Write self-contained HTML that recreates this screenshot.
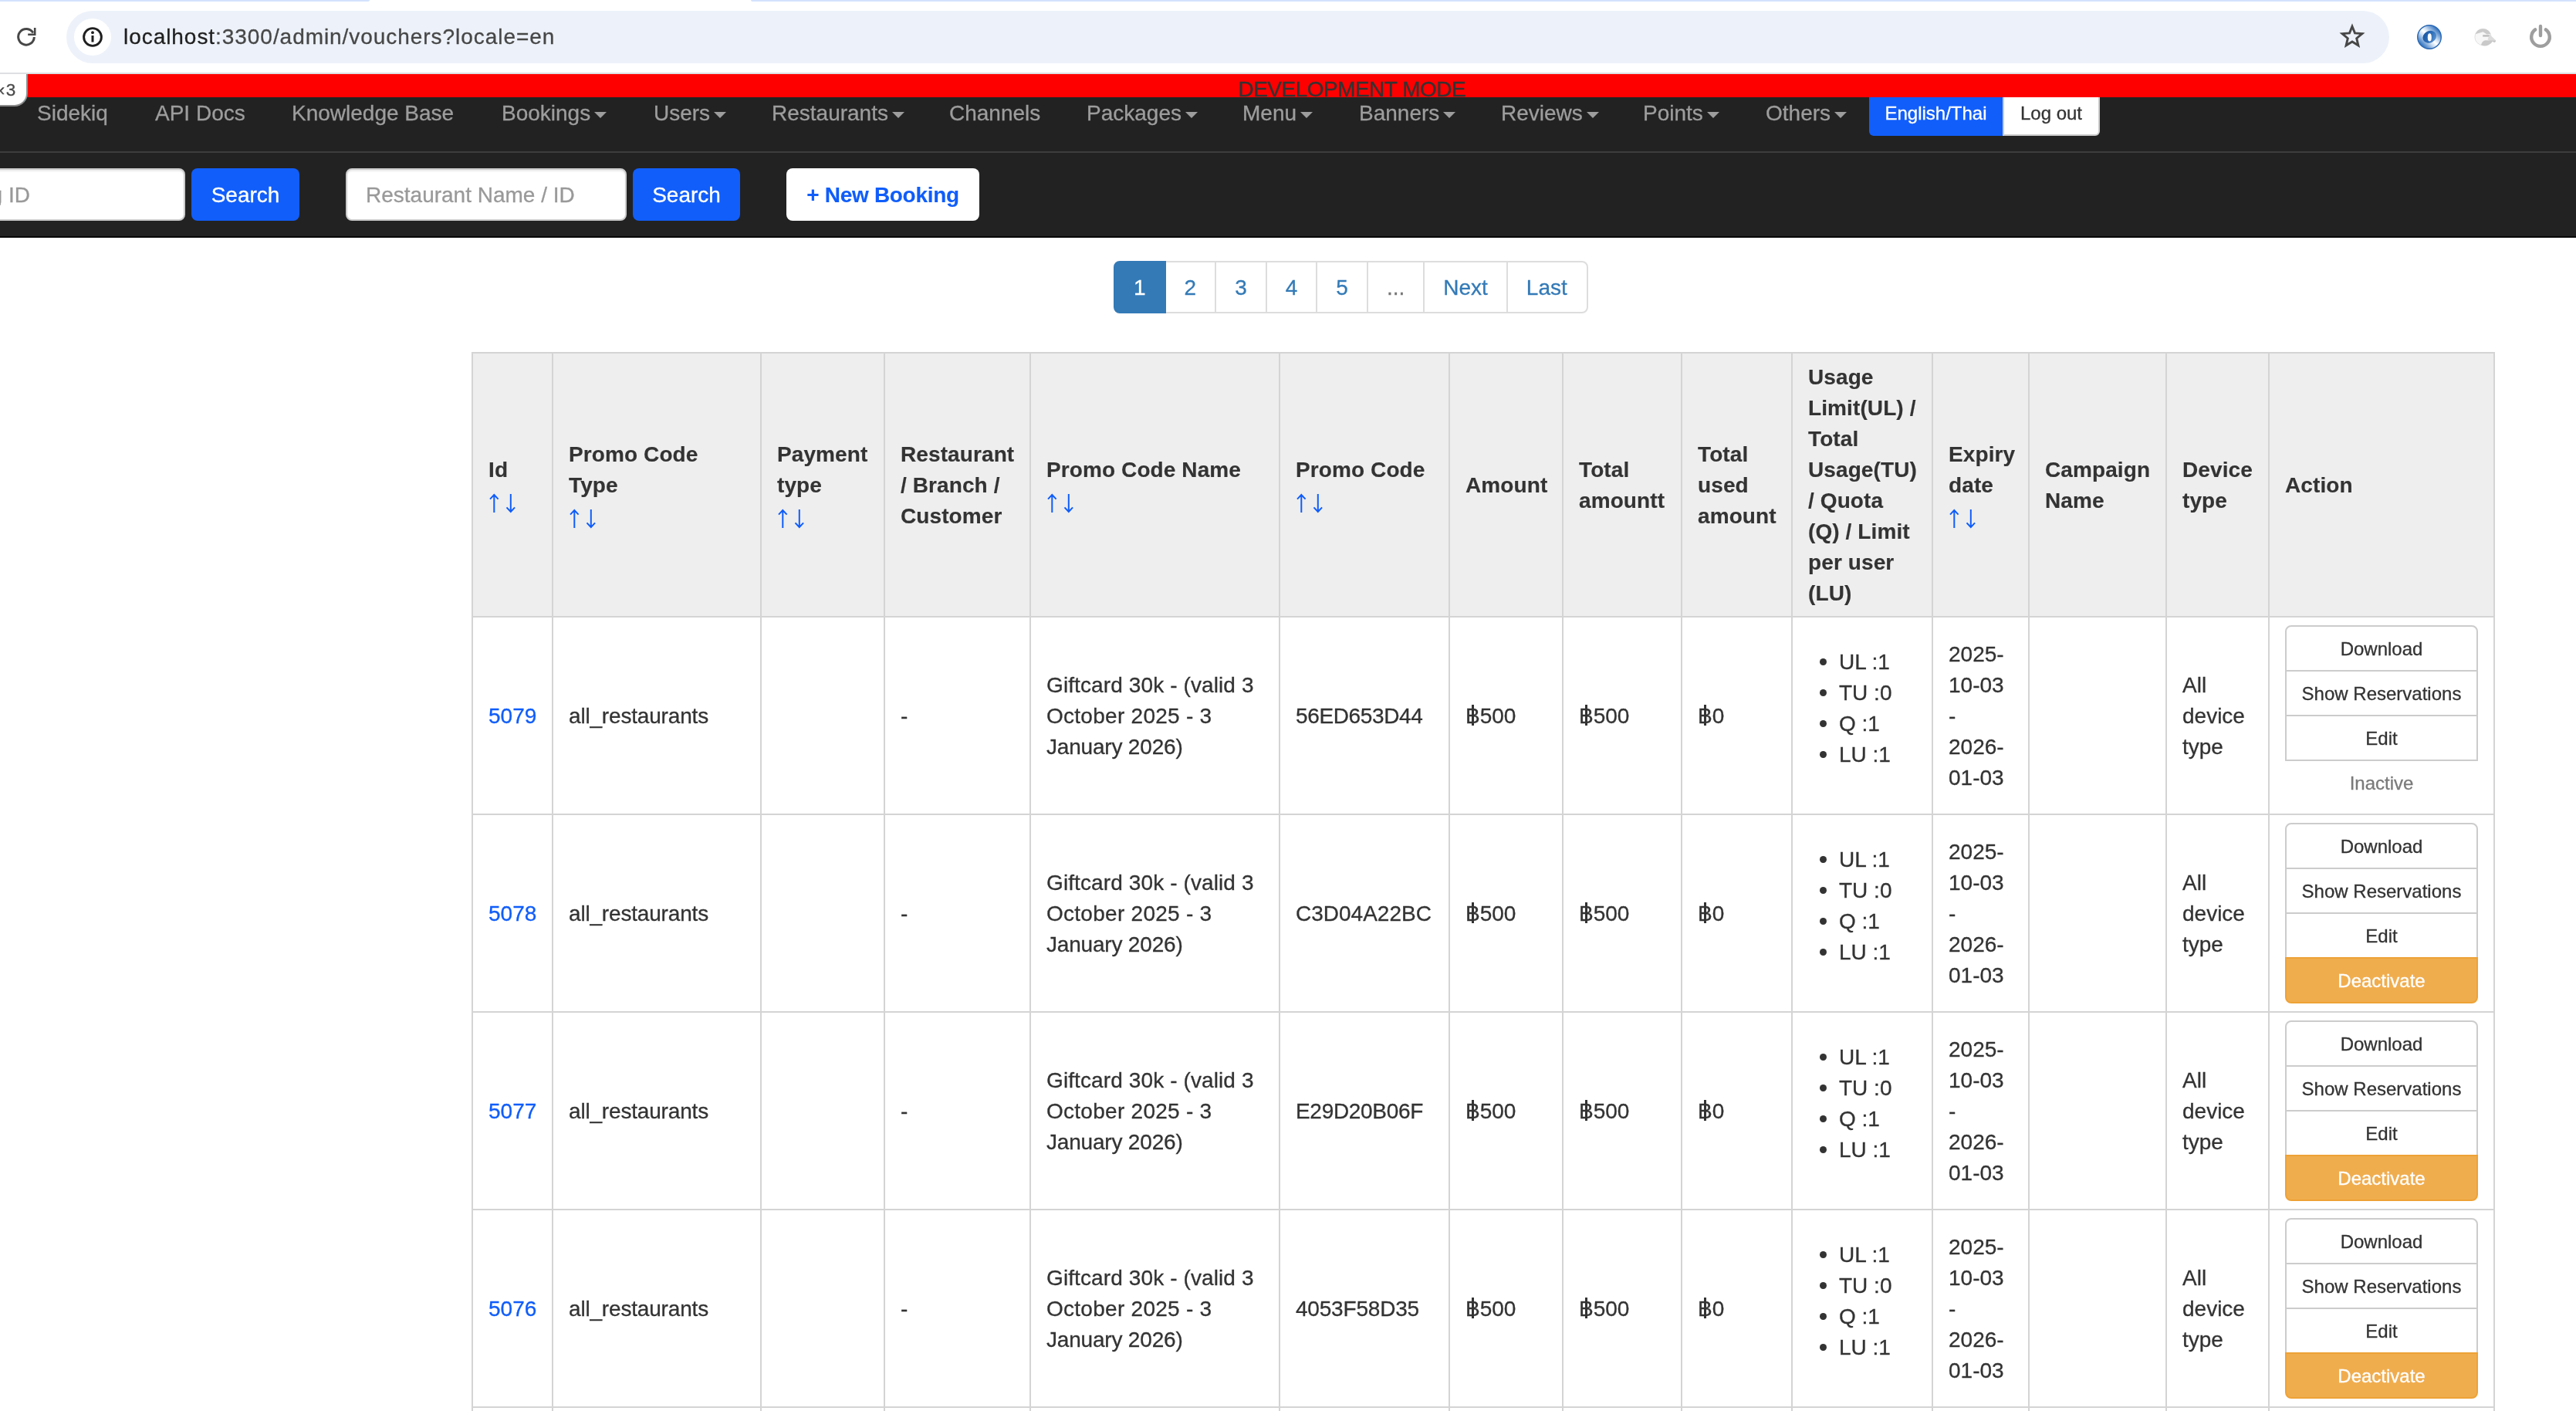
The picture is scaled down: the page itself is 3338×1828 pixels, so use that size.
<!DOCTYPE html>
<html>
<head>
<meta charset="utf-8">
<title>Vouchers</title>
<style>
*{box-sizing:border-box;}
html,body{margin:0;padding:0;}
body{width:3338px;height:1828px;overflow:hidden;background:#fff;position:relative;
  font-family:"Liberation Sans",sans-serif;font-size:28px;line-height:40px;color:#333;-webkit-text-stroke:0.3px;}
a{color:#0f5dfa;text-decoration:none;}
.abs{position:absolute;}
#chrome,#nav,#devbar,#badge,#pag,#tbl{will-change:transform;}

/* ---------- browser chrome ---------- */
#chrome{position:absolute;left:0;top:0;width:3338px;height:96px;background:#fff;z-index:50;}
#chrome .tabstripL{position:absolute;left:0;top:0;width:479px;height:2px;background:#d3e3fd;border-radius:0 0 6px 0;}
#chrome .tabstripR{position:absolute;left:973px;top:0;width:2365px;height:2px;background:#d3e3fd;border-radius:0 0 0 6px;}
#chrome .line{position:absolute;left:0;top:94px;width:3338px;height:2px;background:#dddfe2;}
#omni{position:absolute;left:86px;top:14px;width:3010px;height:68px;border-radius:34px;background:#edf2fa;}
#omni .chip{position:absolute;left:10px;top:10px;width:48px;height:48px;border-radius:24px;background:#fff;}
#url{position:absolute;left:160px;top:28px;font-size:28px;line-height:40px;color:#474747;white-space:nowrap;letter-spacing:0.95px;}
#url b{font-weight:normal;color:#1f1f1f;}

/* ---------- dev bar ---------- */
#devbar{position:absolute;left:0;top:96px;width:3338px;height:30px;background:#ff0000;z-index:20;overflow:hidden;}
#devbar span{position:absolute;left:1604.5px;top:0px;font-size:28px;line-height:40px;color:#333;white-space:nowrap;letter-spacing:-0.52px;}
#badge{position:absolute;left:-4px;top:92px;width:40px;height:46px;background:#fff;border-radius:0 0 17px 0;z-index:30;
  border-right:2px solid #8b9595;border-bottom:2px solid #8a8a8a;font-size:22.5px;line-height:40px;color:#4a4a4a;white-space:nowrap;}
#badge span{position:absolute;left:2.7px;top:5px;letter-spacing:1.5px;}

/* ---------- navbar ---------- */
#nav{position:absolute;left:0;top:96px;width:3338px;height:212px;background:#222;z-index:10;border-bottom:2px solid #080808;}
#nav .div{position:absolute;left:0;top:100px;width:3338px;height:2px;background:#3d3d3d;}
#nav .it{position:absolute;top:31px;font-size:28px;line-height:40px;color:#9d9d9d;white-space:nowrap;}
#nav .it i{display:inline-block;width:0;height:0;margin-left:5px;vertical-align:middle;border-top:8px solid #9d9d9d;border-left:8px solid transparent;border-right:8px solid transparent;position:relative;top:0px;}
.btnsm{position:absolute;height:60px;font-size:24px;line-height:36px;padding:11px 0 9px;border:2px solid transparent;white-space:nowrap;text-align:center;}
.inp{position:absolute;top:122px;height:68px;background:#fff;border:2px solid #ccc;border-radius:8px;box-shadow:inset 0 2px 2px rgba(0,0,0,.075);
  font-size:28px;line-height:40px;padding:13px 24px 11px;color:#999;white-space:nowrap;overflow:hidden;}
.btn{position:absolute;top:122px;height:68px;border-radius:8px;font-size:28px;line-height:40px;padding:13px 0 11px;text-align:center;white-space:nowrap;border:2px solid transparent;}
.btn.pri{background:#115efa;color:#fff;}
.btn.wht{background:#fff;color:#0f5dfa;font-weight:bold;letter-spacing:-0.3px;-webkit-text-stroke:0.1px;}

/* ---------- pagination ---------- */
#pag{position:absolute;left:1443px;top:338px;height:68px;display:flex;}
#pag span{display:block;height:68px;padding:13px 24px 11px;border:2px solid #ddd;margin-left:-2px;color:#337ab7;background:#fff;font-size:28px;line-height:40px;white-space:nowrap;}
#pag span:first-child{margin-left:0;border-radius:8px 0 0 8px;background:#337ab7;border-color:#337ab7;color:#fff;position:relative;z-index:2;}
#pag span:last-child{border-radius:0 8px 8px 0;padding-right:25.5px;}
#pag span.dis{color:#777;}

/* ---------- table ---------- */
#tbl{position:absolute;left:611px;top:456px;border-collapse:collapse;table-layout:fixed;width:2621px;}
#tbl th,#tbl td{border:2px solid #d4d4d4;padding:11px 20px 9px 20px;vertical-align:middle;text-align:left;font-size:28px;line-height:40px;white-space:nowrap;overflow:hidden;}
#tbl th{background:#eee;font-weight:bold;height:342px;color:#333;-webkit-text-stroke:0.15px;letter-spacing:0.1px;}
#tbl td{height:256px;}
#tbl td.stub{height:12px;padding:0;}
#tbl td.act{padding:10px 20px;}
#tbl ul{margin:0 0 20px 0;padding:0 0 0 40px;list-style:none;}
#tbl ul li{position:relative;}
#tbl ul li:before{content:"";position:absolute;left:-25px;top:15px;width:9px;height:9px;border-radius:5px;background:#333;}
#tbl th div{height:40px;position:relative;}
#tbl th div svg{position:absolute;left:0.5px;top:10px;}
.bg{width:250px;}
.bg div{height:60px;margin-top:-2px;border:2px solid #ccc;background:#fff;color:#333;font-size:24px;line-height:36px;padding:11px 0 9px;text-align:center;}
.bg div:first-child{margin-top:0;border-radius:8px 8px 0 0;}
.bg div.last{border-radius:0;}
.bg div.inact{border-color:transparent;background:transparent;color:#7a7a7a;}
.bg div.warn{background:#f0ad4e;border-color:#eea236;color:#fff;border-radius:0 0 8px 8px;}
.baht{position:relative;display:inline-block;}
.baht:after{content:"";position:absolute;left:8px;top:4.5px;width:3px;height:27.5px;background:#333;}
</style>
</head>
<body>

<div id="chrome">
  <div class="tabstripL"></div><div class="tabstripR"></div>
  <svg class="abs" style="left:20px;top:34px" width="28" height="28" viewBox="0 0 28 28"><path d="M22.9 8.6 A10.3 10.3 0 1 0 24.3 14" fill="none" stroke="#474747" stroke-width="3"/><path d="M25.2 2.1 V10.8 H16.2" fill="none" stroke="#474747" stroke-width="2.6"/></svg>
  <div id="omni"><div class="chip"></div></div>
  <svg class="abs" style="left:104px;top:32px" width="32" height="32" viewBox="0 0 32 32"><circle cx="16" cy="16" r="11.4" fill="none" stroke="#1f1f1f" stroke-width="2.9"/><rect x="14.5" y="14" width="3" height="8.5" fill="#1f1f1f"/><circle cx="16" cy="10.2" r="1.9" fill="#1f1f1f"/></svg>
  <div id="url"><b>localhost</b>:3300/admin/vouchers?locale=en</div>
  <svg class="abs" style="left:3030px;top:29px" width="36" height="36" viewBox="0 0 36 36"><path d="M18 5.2 L21.5 13.9 L30.9 14.6 L23.7 20.7 L25.9 29.8 L18 24.9 L10.1 29.8 L12.3 20.7 L5.1 14.6 L14.5 13.9 Z" fill="none" stroke="#474747" stroke-width="2.9" stroke-linejoin="miter"/></svg>
  <svg class="abs" style="left:3120px;top:20px" width="130" height="56" viewBox="0 0 130 56">
    <defs>
      <linearGradient id="g1" x1="1" y1="0" x2="0" y2="1"><stop offset="0.16" stop-color="#3273bf"/><stop offset="0.4" stop-color="#cfe0f3"/><stop offset="0.5" stop-color="#ffffff"/><stop offset="0.6" stop-color="#cfe0f3"/><stop offset="0.84" stop-color="#3273bf"/></linearGradient>
      <linearGradient id="g2" x1="0" y1="0" x2="1" y2="1"><stop offset="0" stop-color="#174f9a"/><stop offset="0.55" stop-color="#2e6fba"/><stop offset="1" stop-color="#6fa2d9"/></linearGradient>
    </defs>
    <circle cx="28" cy="28" r="15.3" fill="url(#g1)" stroke="#2a68b4" stroke-width="1.4"/>
    <ellipse cx="28.3" cy="27.7" rx="9.2" ry="7.6" fill="url(#g2)" transform="rotate(-28 28.3 27.7)"/>
    <ellipse cx="28.3" cy="28.4" rx="2.5" ry="5.1" fill="#fff"/>
    <circle cx="97.5" cy="28" r="10.6" fill="#f7f7f7" stroke="#e2e2e2" stroke-width="1"/>
    <path d="M87.6 24.2 A10.6 10.6 0 0 1 107.3 23.9 L102.5 24.6 L97.6 21.2 L92.6 22.8 Z" fill="#cbcbcb"/>
    <rect x="97.2" y="25.2" width="9" height="2.4" fill="#bcbcbc"/>
    <path d="M106 24.5 L114.3 32.6 L112.8 34.9 L108.5 33.4 L103.5 31.4 Z" fill="#dcdcdc"/>
    <path d="M111 32.4 L114.3 32.7 L112.8 34.9 L109.6 33.8 Z" fill="#c6c6c6"/>
    <path d="M95 38.3 Q96.5 32.6 100.5 32.3 L110.6 32.4 Q108.5 36.6 104.3 38.6 A10.6 10.6 0 0 1 95 38.3 Z" fill="#c9c9c9"/>
  </svg>
  <svg class="abs" style="left:3274px;top:29px" width="36" height="36" viewBox="0 0 36 36"><path d="M11.2 9.4 A11.8 11.8 0 1 0 24.8 9.4" fill="none" stroke="#9e9e9e" stroke-width="4.4" stroke-linecap="round"/><path d="M18 5 V17" stroke="#9e9e9e" stroke-width="4.4" stroke-linecap="round"/></svg>
  <div class="line"></div>
</div>

<div id="devbar"><span>DEVELOPMENT MODE</span></div>
<div id="badge"><span>&#8249;3</span></div>
<div id="nav">
  <div class="it" style="left:48px">Sidekiq</div>
  <div class="it" style="left:201px">API Docs</div>
  <div class="it" style="left:378px">Knowledge Base</div>
  <div class="it" style="left:650px">Bookings<i></i></div>
  <div class="it" style="left:847px">Users<i></i></div>
  <div class="it" style="left:1000px">Restaurants<i></i></div>
  <div class="it" style="left:1230px">Channels</div>
  <div class="it" style="left:1408px">Packages<i></i></div>
  <div class="it" style="left:1610px">Menu<i></i></div>
  <div class="it" style="left:1761px">Banners<i></i></div>
  <div class="it" style="left:1945px">Reviews<i></i></div>
  <div class="it" style="left:2129px">Points<i></i></div>
  <div class="it" style="left:2288px">Others<i></i></div>
  <div class="btnsm" style="left:2422px;top:20px;width:173px;background:#115efa;color:#fff;border-radius:6px 0 0 6px;">English/Thai</div>
  <div class="btnsm" style="left:2595px;top:20px;width:126px;background:#fff;color:#333;border-color:#ccc;border-radius:0 6px 6px 0;">Log out</div>
  <div class="div"></div>
  <div class="inp" style="left:-124px;width:364px;">Booking ID</div>
  <div class="btn pri" style="left:248px;width:140px;">Search</div>
  <div class="inp" style="left:448px;width:364px;">Restaurant Name / ID</div>
  <div class="btn pri" style="left:820px;width:139px;">Search</div>
  <div class="btn wht" style="left:1019px;width:250px;">+ New Booking</div>
</div>
<div id="pag"><span>1</span><span>2</span><span>3</span><span>4</span><span>5</span><span class="dis">...</span><span>Next</span><span>Last</span></div>
<table id="tbl">
<colgroup><col style="width:104px"><col style="width:270px"><col style="width:160px"><col style="width:189px"><col style="width:323px"><col style="width:220px"><col style="width:147px"><col style="width:154px"><col style="width:143px"><col style="width:182px"><col style="width:125px"><col style="width:178px"><col style="width:133px"><col style="width:292px"></colgroup>
<tr>
<th><div>Id</div><div><svg width="36" height="26" viewBox="0 0 36 26"><g fill="none" stroke="#0f5dfa" stroke-width="2"><path d="M6.3 25 V2 M1 7.6 L6.3 2 L11.6 7.6"/><path d="M27.8 1 V24 M22.5 18.4 L27.8 24 L33.1 18.4"/></g></svg></div></th>
<th><div>Promo Code</div><div>Type</div><div><svg width="36" height="26" viewBox="0 0 36 26"><g fill="none" stroke="#0f5dfa" stroke-width="2"><path d="M6.3 25 V2 M1 7.6 L6.3 2 L11.6 7.6"/><path d="M27.8 1 V24 M22.5 18.4 L27.8 24 L33.1 18.4"/></g></svg></div></th>
<th><div>Payment</div><div>type</div><div><svg width="36" height="26" viewBox="0 0 36 26"><g fill="none" stroke="#0f5dfa" stroke-width="2"><path d="M6.3 25 V2 M1 7.6 L6.3 2 L11.6 7.6"/><path d="M27.8 1 V24 M22.5 18.4 L27.8 24 L33.1 18.4"/></g></svg></div></th>
<th><div>Restaurant</div><div>/ Branch /</div><div>Customer</div></th>
<th><div>Promo Code Name</div><div><svg width="36" height="26" viewBox="0 0 36 26"><g fill="none" stroke="#0f5dfa" stroke-width="2"><path d="M6.3 25 V2 M1 7.6 L6.3 2 L11.6 7.6"/><path d="M27.8 1 V24 M22.5 18.4 L27.8 24 L33.1 18.4"/></g></svg></div></th>
<th><div>Promo Code</div><div><svg width="36" height="26" viewBox="0 0 36 26"><g fill="none" stroke="#0f5dfa" stroke-width="2"><path d="M6.3 25 V2 M1 7.6 L6.3 2 L11.6 7.6"/><path d="M27.8 1 V24 M22.5 18.4 L27.8 24 L33.1 18.4"/></g></svg></div></th>
<th><div>Amount</div></th>
<th><div>Total</div><div>amountt</div></th>
<th><div>Total</div><div>used</div><div>amount</div></th>
<th><div>Usage</div><div>Limit(UL) /</div><div>Total</div><div>Usage(TU)</div><div>/ Quota</div><div>(Q) / Limit</div><div>per user</div><div>(LU)</div></th>
<th><div>Expiry</div><div>date</div><div><svg width="36" height="26" viewBox="0 0 36 26"><g fill="none" stroke="#0f5dfa" stroke-width="2"><path d="M6.3 25 V2 M1 7.6 L6.3 2 L11.6 7.6"/><path d="M27.8 1 V24 M22.5 18.4 L27.8 24 L33.1 18.4"/></g></svg></div></th>
<th><div>Campaign</div><div>Name</div></th>
<th><div>Device</div><div>type</div></th>
<th><div>Action</div></th>
</tr>
<tr><td><a>5079</a></td><td><span style="letter-spacing:-0.18px">all_restaurants</span></td><td></td><td>-</td><td><span style="letter-spacing:0.11px">Giftcard 30k - (valid 3</span><br><span style="letter-spacing:0.27px">October 2025 - 3</span><br><span style="letter-spacing:-0.19px">January 2026)</span></td><td><span style="letter-spacing:-0.37px">56ED653D44</span></td><td><span class="baht">B</span>500</td><td><span class="baht">B</span>500</td><td><span class="baht">B</span>0</td><td><ul><li>UL :1</li><li>TU :0</li><li>Q :1</li><li>LU :1</li></ul></td><td>2025-<br>10-03<br>-<br>2026-<br>01-03</td><td></td><td>All<br>device<br>type</td><td class="act"><div class="bg"><div>Download</div><div>Show Reservations</div><div class="last">Edit</div><div class="inact">Inactive</div></div></td></tr>
<tr><td><a>5078</a></td><td><span style="letter-spacing:-0.18px">all_restaurants</span></td><td></td><td>-</td><td><span style="letter-spacing:0.11px">Giftcard 30k - (valid 3</span><br><span style="letter-spacing:0.27px">October 2025 - 3</span><br><span style="letter-spacing:-0.19px">January 2026)</span></td><td><span style="letter-spacing:0px">C3D04A22BC</span></td><td><span class="baht">B</span>500</td><td><span class="baht">B</span>500</td><td><span class="baht">B</span>0</td><td><ul><li>UL :1</li><li>TU :0</li><li>Q :1</li><li>LU :1</li></ul></td><td>2025-<br>10-03<br>-<br>2026-<br>01-03</td><td></td><td>All<br>device<br>type</td><td class="act"><div class="bg"><div>Download</div><div>Show Reservations</div><div class="">Edit</div><div class="warn">Deactivate</div></div></td></tr>
<tr><td><a>5077</a></td><td><span style="letter-spacing:-0.18px">all_restaurants</span></td><td></td><td>-</td><td><span style="letter-spacing:0.11px">Giftcard 30k - (valid 3</span><br><span style="letter-spacing:0.27px">October 2025 - 3</span><br><span style="letter-spacing:-0.19px">January 2026)</span></td><td><span style="letter-spacing:-0.31px">E29D20B06F</span></td><td><span class="baht">B</span>500</td><td><span class="baht">B</span>500</td><td><span class="baht">B</span>0</td><td><ul><li>UL :1</li><li>TU :0</li><li>Q :1</li><li>LU :1</li></ul></td><td>2025-<br>10-03<br>-<br>2026-<br>01-03</td><td></td><td>All<br>device<br>type</td><td class="act"><div class="bg"><div>Download</div><div>Show Reservations</div><div class="">Edit</div><div class="warn">Deactivate</div></div></td></tr>
<tr><td><a>5076</a></td><td><span style="letter-spacing:-0.18px">all_restaurants</span></td><td></td><td>-</td><td><span style="letter-spacing:0.11px">Giftcard 30k - (valid 3</span><br><span style="letter-spacing:0.27px">October 2025 - 3</span><br><span style="letter-spacing:-0.19px">January 2026)</span></td><td><span style="letter-spacing:-0.2px">4053F58D35</span></td><td><span class="baht">B</span>500</td><td><span class="baht">B</span>500</td><td><span class="baht">B</span>0</td><td><ul><li>UL :1</li><li>TU :0</li><li>Q :1</li><li>LU :1</li></ul></td><td>2025-<br>10-03<br>-<br>2026-<br>01-03</td><td></td><td>All<br>device<br>type</td><td class="act"><div class="bg"><div>Download</div><div>Show Reservations</div><div class="">Edit</div><div class="warn">Deactivate</div></div></td></tr>
<tr><td class="stub"></td><td class="stub"></td><td class="stub"></td><td class="stub"></td><td class="stub"></td><td class="stub"></td><td class="stub"></td><td class="stub"></td><td class="stub"></td><td class="stub"></td><td class="stub"></td><td class="stub"></td><td class="stub"></td><td class="stub"></td></tr>
</table>
</body>
</html>
